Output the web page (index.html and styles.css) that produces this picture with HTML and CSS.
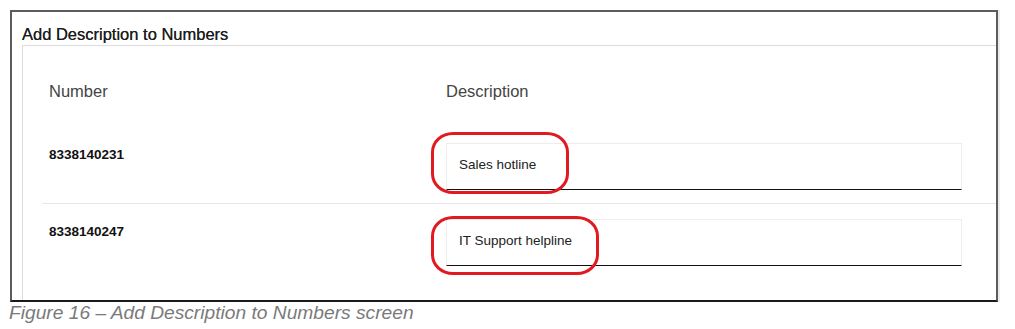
FILE: index.html
```html
<!DOCTYPE html>
<html lang="en">
<head>
    <meta charset="UTF-8">
    <title>Add Description to Numbers</title>
    <link rel="stylesheet" href="styles.css">
</head>
<body>

    <div class="frame">
        <h2 class="title">Add Description to Numbers</h2>
        <div class="panel">
            <div class="row head">
                <div>Number</div>
                <div>Description</div>
            </div>
            <div class="row">
                <div class="number">8338140231</div>
                <div class="cell">
                    <div class="field">Sales hotline</div>
                    <span class="ring ring-one"></span>
                </div>
            </div>
            <div class="row last">
                <div class="number">8338140247</div>
                <div class="cell">
                    <div class="field">IT Support helpline</div>
                    <span class="ring ring-two"></span>
                </div>
            </div>
        </div>
    </div>

    <p class="caption">Figure 16 – Add Description to Numbers screen</p>

</body>
</html>
```

FILE: styles.css
```css
body {
    font-family: 'Liberation Sans', Arial, sans-serif;
    margin: 0;
    background-color: #fff;
}

.frame {
    margin: 10px 0 0 10px;
    width: 984px;
    border: 2px solid #5c5c5c;
    border-bottom-color: #1a1a1a;
    box-shadow: 2px 0 0 #ececec;
}

.title {
    margin: 0;
    padding: 13px 0 0 10px;
    font-size: 16.5px;
    line-height: 18px;
    font-weight: normal;
    color: #1c1c1c;
    text-shadow: 0 0 0.2px #333;
}

.panel {
    margin: 2px 0 0 10px;
    border-left: 1px solid #dcdcdc;
    border-top: 1px solid #dcdcdc;
}

.row {
    display: grid;
    grid-template-columns: 397px 516px;
    margin-left: 19px;
    padding: 16px 0 13px 7px;
    border-bottom: 1px solid #e6e6e6;
}

.row.head {
    padding: 36px 0 27px 7px;
    border-bottom: none;
    font-size: 16.5px;
    line-height: 18px;
    color: #444;
}

.row.last {
    padding-top: 15px;
    padding-bottom: 34px;
    border-bottom: none;
}

.number {
    padding-top: 4px;
    font-size: 13.5px;
    line-height: 16px;
    font-weight: bold;
    color: #111;
}

.row.last .number {
    padding-top: 5px;
}

.cell {
    position: relative;
}

.field {
    box-sizing: border-box;
    height: 47px;
    display: flex;
    align-items: center;
    padding: 0 0 4px 12px;
    border: 1px solid #ededed;
    border-bottom: 1px solid #111;
    font-size: 13.5px;
    color: #222;
}

/* red annotation marks drawn over the screenshot */
.ring {
    position: absolute;
    left: -15px;
    box-sizing: border-box;
    border: 3.5px solid #e11a22;
    border-radius: 22px / 20px;
}

.ring-one {
    top: -11px;
    width: 138px;
    height: 62px;
}

.ring-two {
    top: -3px;
    width: 168px;
    height: 59px;
}

.caption {
    margin: 0 0 0 9px;
    font-size: 19.2px;
    line-height: 22px;
    font-style: italic;
    color: #7a7a7a;
}
```
